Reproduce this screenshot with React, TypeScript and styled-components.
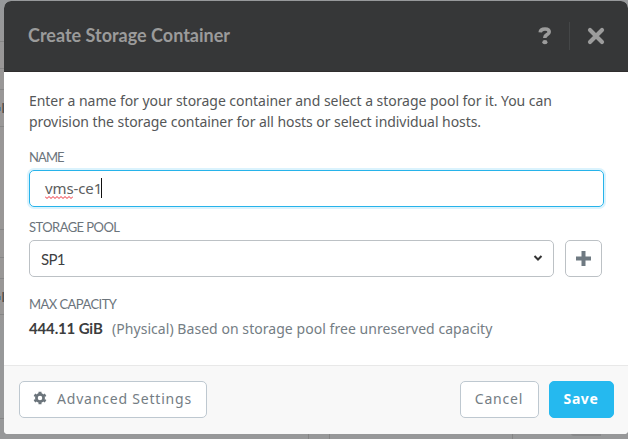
import React from 'react';
import styled, { createGlobalStyle } from 'styled-components';

const GlobalStyle = createGlobalStyle`
  * { box-sizing: border-box; }
  html, body { margin: 0; width: 628px; height: 439px; overflow: hidden; }
  body { background: #979899; font-family: "Noto Sans", "Open Sans", sans-serif; }
  button, input { font-family: inherit; margin: 0; }
`;

const Screen = styled.div`
  position: relative;
  width: 628px;
  height: 439px;
  padding: 1px 0 5px 4px;
  overflow: hidden;
  background: linear-gradient(#97999b, #999797 60px, #999796 310px, #979899 330px);
`;

const RowLine = styled.i<{ $y: number }>`
  position: absolute;
  left: 0;
  top: ${(p) => p.$y}px;
  width: 4px;
  height: 1px;
  background: #868686;
`;

const ChartMark = styled.i<{ $y: number }>`
  position: absolute;
  left: 0;
  top: ${(p) => p.$y}px;
  width: 4px;
  height: 10px;
  background:
    linear-gradient(#57809a, #57809a) 0 4px / 1px 4px no-repeat,
    linear-gradient(90deg, #8b6a51 1px, #4d5560 1px) 2px 0 / 2px 10px no-repeat;
`;

const ColumnLine = styled.i<{ $x: number }>`
  position: absolute;
  left: ${(p) => p.$x}px;
  top: 434px;
  width: 1px;
  height: 5px;
  background: #858585;
`;

const BackdropTab = styled.i`
  position: absolute;
  left: 571px;
  top: 433px;
  width: 30px;
  height: 3px;
  border-radius: 0 0 0 4px;
  background: #88898a;
`;

const Dialog = styled.section`
  position: relative;
  display: flex;
  flex-direction: column;
  width: 624px;
  height: 433px;
  border-radius: 7px 7px 4px 4px;
  overflow: hidden;
  background: #fff;
`;

const Header = styled.header`
  display: flex;
  align-items: center;
  flex: none;
  height: 71px;
  padding: 0 23px 0 24px;
  background: #363738;
  border-bottom: 1px solid #302e2e;
`;

const Title = styled.h1`
  flex: 1;
  margin: 0 0 3px;
  font: 700 18px/22px Lato, sans-serif;
  letter-spacing: 0;
  white-space: nowrap;
  color: #9b9b9b;
`;

const HeaderAction = styled.button<{ $divided?: boolean }>`
  display: flex;
  align-items: center;
  justify-content: ${(p) => (p.$divided ? 'flex-end' : 'flex-start')};
  width: ${(p) => (p.$divided ? 36 : 31)}px;
  height: 28px;
  padding: 0;
  border: 0;
  border-left: ${(p) => (p.$divided ? '1px solid #444647' : '0')};
  background: none;
  color: #9c9c9c;
`;

const Body = styled.main`
  flex: none;
  height: 293px;
  padding: 18px 24px 0 25px;
`;

const Intro = styled.p`
  margin: 0;
  height: 42px;
  font-size: 14px;
  line-height: 21px;
  color: #555758;
`;

const IntroLine = styled.span<{ $spacing: number }>`
  display: block;
  white-space: nowrap;
  letter-spacing: ${(p) => p.$spacing}px;
`;

const Label = styled.label<{ $top: number; $gap: number; $spacing: number }>`
  display: block;
  margin-top: ${(p) => p.$top}px;
  margin-bottom: ${(p) => p.$gap}px;
  font: 400 13px/14px Lato, sans-serif;
  letter-spacing: ${(p) => p.$spacing}px;
  white-space: nowrap;
  color: #6b747b;
`;

const NameField = styled.div`
  display: flex;
  align-items: center;
  height: 37px;
  padding: 0 0 1px 15px;
  border: 1px solid #27b3ea;
  border-radius: 5px;
  box-shadow: 0 0 0 2px #dbf3fd;
  font-size: 15px;
  line-height: 20px;
  letter-spacing: -0.1px;
  color: #5c5e60;
`;

const Misspelled = styled.span`
  position: relative;
`;

const Squiggle = styled.svg`
  position: absolute;
  left: 0;
  bottom: -1px;
`;

const Caret = styled.span`
  width: 1px;
  height: 20px;
  margin-left: -1px;
  background: #111;
`;

const PoolRow = styled.div`
  display: flex;
  gap: 11px;
`;

const Select = styled.div`
  display: flex;
  align-items: center;
  justify-content: space-between;
  width: 525px;
  height: 37px;
  padding: 0 10px 0 11px;
  border: 1px solid #bcc1c5;
  border-radius: 5px;
  font: 400 15px/20px Lato, sans-serif;
  letter-spacing: -0.7px;
  color: #3e4042;
`;

const AddButton = styled.button`
  display: flex;
  align-items: center;
  justify-content: center;
  width: 37px;
  height: 37px;
  padding: 0;
  border: 1px solid #bcc1c5;
  border-radius: 5px;
  background: #fff;
`;

const Capacity = styled.div`
  display: flex;
  align-items: baseline;
  height: 20px;
  gap: 10px;
  line-height: 20px;
  white-space: nowrap;
`;

const CapacityValue = styled.strong`
  width: 73px;
  font-family: Lato, sans-serif;
  font-size: 15px;
  font-weight: 700;
  letter-spacing: -0.15px;
  color: #3c3d3e;
`;

const CapacityNote = styled.span`
  font-size: 14px;
  letter-spacing: 0.05px;
  color: #747d84;
`;

const Footer = styled.footer`
  display: flex;
  flex: 1;
  align-items: flex-start;
  padding: 15px 14px 0 15px;
  border-top: 1px solid #e8e8e8;
  background: #f8f8f8;
`;

const Button = styled.button<{ $width: number; $primary?: boolean; $spacing: number }>`
  display: flex;
  align-items: center;
  justify-content: center;
  width: ${(p) => p.$width}px;
  height: 37px;
  padding: 0 1px 3px 0;
  border: 1px solid ${(p) => (p.$primary ? '#25b9ef' : '#bec8d0')};
  border-radius: 5px;
  background: ${(p) => (p.$primary ? '#25b9ef' : '#fff')};
  color: ${(p) => (p.$primary ? '#fff' : '#747d84')};
  font-size: 14px;
  font-weight: ${(p) => (p.$primary ? 700 : 400)};
  letter-spacing: ${(p) => p.$spacing}px;
  white-space: nowrap;
  svg { margin-right: 10px; }
`;

const Actions = styled.div`
  display: flex;
  gap: 10px;
  margin-left: auto;
`;

const HelpIcon = () => (
  <svg width="14" height="18" viewBox="0 0 14 18" fill="none">
    <path d="M2.2 5.4C2.4 3.2 4.2 2 7 2c2.6 0 4.2 1 4.2 2.9 0 2.8-4.3 2.6-4.3 5.4v.8" stroke="currentColor" strokeWidth="3.6" />
    <ellipse cx="6.9" cy="15.2" rx="2.6" ry="2.1" fill="currentColor" />
  </svg>
);

const CloseIcon = () => (
  <svg width="18" height="18" viewBox="0 0 18 18">
    <path d="M3 3l12 12M15 3L3 15" stroke="currentColor" strokeWidth="4.2" strokeLinecap="round" />
  </svg>
);

const GearIcon = () => (
  <svg width="14" height="14" viewBox="0 0 14 14" fill="none" stroke="#6b747b">
    <circle cx="7" cy="7" r="3.6" strokeWidth="2.7" />
    <path d="M7 .8v2M7 11.2v2M1.4 3.8l1.7 1M10.9 9.2l1.7 1M1.4 10.2l1.7-1M10.9 4.8l1.7-1" strokeWidth="3" />
  </svg>
);

export default function App() {
  return (
    <>
      <GlobalStyle />
      <Screen>
        {[41, 68, 89, 126, 229, 257, 278, 314, 418].map((y) => <RowLine key={y} $y={y} />)}
        <ChartMark $y={103} />
        <ChartMark $y={292} />
        {[308, 329, 512].map((x) => <ColumnLine key={x} $x={x} />)}
        <BackdropTab />
        <Dialog>
          <Header>
            <Title>Create Storage Container</Title>
            <HeaderAction aria-label="Help"><HelpIcon /></HeaderAction>
            <HeaderAction $divided aria-label="Close"><CloseIcon /></HeaderAction>
          </Header>
          <Body>
            <Intro>
              <IntroLine $spacing={-0.04}>Enter a name for your storage container and select a storage pool for it. You can</IntroLine>
              <IntroLine $spacing={-0.06}>provision the storage container for all hosts or select individual hosts.</IntroLine>
            </Intro>
            <Label $top={18} $gap={6} $spacing={-0.9}>NAME</Label>
            <NameField>
              <Misspelled>
                vms
                <Squiggle width="28" height="3" viewBox="0 0 28 3">
                  <path d="M0 .5l2 2 2-2 2 2 2-2 2 2 2-2 2 2 2-2 2 2 2-2 2 2 2-2 2 2 2-2" fill="none" stroke="#ee2a35" />
                </Squiggle>
              </Misspelled>
              -ce1
              <Caret />
            </NameField>
            <Label $top={13} $gap={6} $spacing={-0.55}>STORAGE POOL</Label>
            <PoolRow>
              <Select>
                SP1
                <svg width="10" height="8" viewBox="0 0 10 8"><path d="M1.5 1L5 4.5 8.5 1" fill="none" stroke="#333" strokeWidth="2" /></svg>
              </Select>
              <AddButton aria-label="Add storage pool">
                <svg width="15" height="15" viewBox="0 0 15 15"><path d="M7.5 0v15M0 7.5h15" stroke="#6f7a82" strokeWidth="4" /></svg>
              </AddButton>
            </PoolRow>
            <Label $top={20} $gap={7} $spacing={-0.55}>MAX CAPACITY</Label>
            <Capacity>
              <CapacityValue>444.11 GiB</CapacityValue>
              <CapacityNote>(Physical) Based on storage pool free unreserved capacity</CapacityNote>
            </Capacity>
          </Body>
          <Footer>
            <Button $width={188} $spacing={0.8}><GearIcon />Advanced Settings</Button>
            <Actions>
              <Button $width={79} $spacing={0.8}>Cancel</Button>
              <Button $width={65} $spacing={0.6} $primary>Save</Button>
            </Actions>
          </Footer>
        </Dialog>
      </Screen>
    </>
  );
}
